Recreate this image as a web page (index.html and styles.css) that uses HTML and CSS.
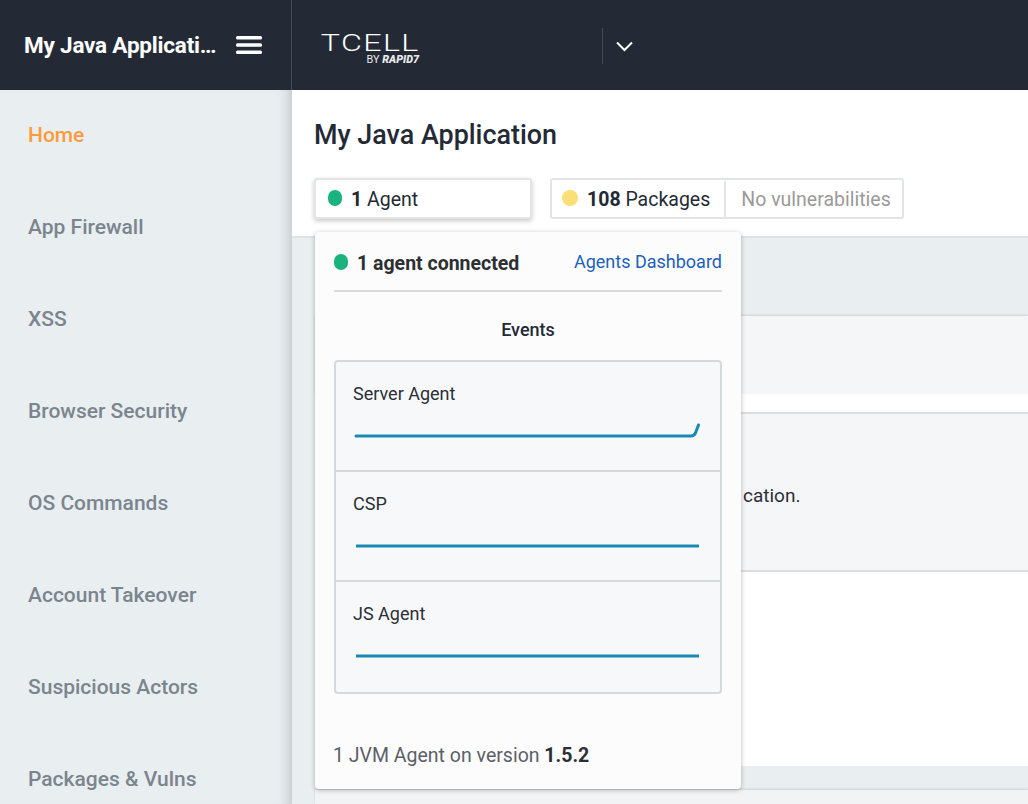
FILE: index.html
```html
<!DOCTYPE html>
<html lang="en">
<head>
<meta charset="utf-8">
<title>My Java Application</title>
<link rel="stylesheet" href="styles.css">
</head>
<body>
<header class="topbar">
  <div class="app-switch">
    <span class="app-name">My Java Application</span>
    <svg class="burger" width="26" height="18" viewBox="0 0 26 18"><rect y="0" width="26" height="3.500" rx="1.500"/><rect y="7.250" width="26" height="3.500" rx="1.500"/><rect y="14.500" width="26" height="3.500" rx="1.500"/></svg>
  </div>
  <div class="brand">
    <div class="logo">
      <span class="logo-main">TCELL</span>
      <span class="logo-sub">BY <b>RAPID7</b></span>
    </div>
  </div>
  <div class="brand-menu">
    <svg width="17" height="11" viewBox="0 0 17 11"><path d="M1 1.500 8.500 9 16 1.500" fill="none" stroke="#fff" stroke-width="2"/></svg>
  </div>
</header>
<div class="body">
  <nav class="sidebar">
    <a class="nav-item active">Home</a>
    <a class="nav-item">App Firewall</a>
    <a class="nav-item">XSS</a>
    <a class="nav-item">Browser Security</a>
    <a class="nav-item">OS Commands</a>
    <a class="nav-item">Account Takeover</a>
    <a class="nav-item">Suspicious Actors</a>
    <a class="nav-item">Packages &amp; Vulns</a>
  </nav>
  <main class="main">
    <section class="head">
      <h1 class="title">My Java Application</h1>
      <div class="chips">
        <div class="chip chip-open"><span class="dot green"></span><span><b>1</b> Agent</span></div>
        <div class="chip chip-split">
          <div class="chip-part"><span class="dot yellow"></span><span><b>108</b> Packages</span></div>
          <div class="chip-part muted">No vulnerabilities</div>
        </div>
      </div>
    </section>
    <section class="content">
      <div class="panel panel-a"></div>
      <div class="gap-white"></div>
      <div class="panel panel-b"><p class="panel-text">cation.</p></div>
      <div class="panel-white"></div>
      <div class="gap-gray"></div>
      <div class="panel-last"></div>
    </section>
    <aside class="popover">
      <div class="pop-head">
        <div class="pop-status"><span class="dot green"></span><b>1 agent connected</b></div>
        <a class="pop-link">Agents Dashboard</a>
      </div>
      <h2 class="pop-title">Events</h2>
      <div class="events">
        <div class="event">
          <div class="event-name">Server Agent</div>
          <svg class="spark" width="345" height="20" viewBox="0 0 345 20"><path d="M2 17H337Q340 17 341.500 14L344.500 6" fill="none" stroke="#1a8ab5" stroke-width="3" stroke-linecap="round"/></svg>
        </div>
        <div class="event">
          <div class="event-name">CSP</div>
          <svg class="spark" width="345" height="20" viewBox="0 0 345 20"><path d="M2 17H345" fill="none" stroke="#1a8ab5" stroke-width="3"/></svg>
        </div>
        <div class="event">
          <div class="event-name">JS Agent</div>
          <svg class="spark" width="345" height="20" viewBox="0 0 345 20"><path d="M2 17H345" fill="none" stroke="#1a8ab5" stroke-width="3"/></svg>
        </div>
      </div>
      <div class="pop-foot">1 JVM Agent on version <b>1.5.2</b></div>
    </aside>
  </main>
</div>
</body>
</html>
```
FILE: styles.css
```css
* { box-sizing: border-box; }
html, body { margin: 0; height: 100%; overflow: hidden; }
body { font-family: Roboto, "Liberation Sans", sans-serif; background: #fff; color: #232a35; }
b { font-weight: 700; }

.topbar { display: flex; height: 90px; background: #232a35; color: #fff; }
.app-switch { width: 292px; flex: none; display: flex; align-items: center; padding: 0 29px 0 24px; border-right: 1px solid #444b55; }
.app-name { flex: 1; min-width: 0; font-size: 22.500px; font-weight: 700; letter-spacing: -.2px; white-space: nowrap; overflow: hidden; text-overflow: ellipsis; margin-right: 17px; }
.burger { flex: none; fill: #fff; }
.brand { width: 310px; flex: none; display: flex; align-items: center; padding: 0 0 0 30px; }
.logo { width: 97px; display: flex; flex-direction: column; align-items: flex-end; margin-top: 10px; }
.logo-main { font-family: Roboto, sans-serif; font-weight: 300; font-size: 23px; line-height: 18px; letter-spacing: 1px; margin-right: -1px; white-space: nowrap; transform: scaleX(1.4); transform-origin: right center; }
.logo-sub { font-size: 10.800px; line-height: 11px; margin-top: 1px; white-space: nowrap; color: #e8eaec; }
.logo-sub b { font-weight: 900; font-style: italic; }
.brand-menu { display: flex; align-items: center; height: 36px; align-self: center; padding-left: 13px; border-left: 1px solid #444b55; margin-top: 2px; }
.brand-menu svg { display: block; }

.body { display: flex; height: 714px; overflow: hidden; }
.sidebar { width: 292px; flex: none; height: 714px; overflow: hidden; background: #e9eef1; box-shadow: inset -12px 0 12px -8px #c5cacd; padding: 22px 0 0 28px; display: flex; flex-direction: column; }
.nav-item { height: 92px; flex: none; font-size: 21px; font-weight: 500; line-height: 46px; color: #7b858e; white-space: nowrap; }
.nav-item.active { color: #fd9b3b; }

.main { flex: 1; min-width: 0; position: relative; display: flex; flex-direction: column; }
.head { height: 148px; flex: none; padding: 27px 0 0 22px; border-bottom: 2px solid #dfe3e6; }
.title { margin: 0; font-size: 26.900px; line-height: 36px; font-weight: 500; color: #232a35; }
.chips { display: flex; gap: 18px; margin-top: 25px; font-size: 19.500px; }
.chip { height: 41px; display: flex; align-items: center; border: 2px solid #e3e4e6; border-radius: 3px; background: #fff; color: #232a35; white-space: nowrap; padding-top: 1px; }
.chip-open { width: 218px; padding-left: 12px; gap: 9px; box-shadow: 0 2px 5px rgba(0,0,0,.22); }
.chip-part { display: flex; align-items: center; gap: 9px; height: 100%; padding: 0 14px 0 10px; }
.chip-part.muted { color: #9a9a9a; border-left: 2px solid #e3e4e6; padding: 0 11px 0 15px; }
.dot { width: 14px; height: 16px; border-radius: 7px; flex: none; margin-top: -2px; }
.dot.green { background: #1ab37d; }
.dot.yellow { width: 16px; height: 16px; border-radius: 50%; background: #f9df75; }

.content { flex: 1; min-height: 0; overflow: hidden; background: #e9eef1; padding: 78px 0 0 23px; display: flex; flex-direction: column; }
.panel { background: #f4f6f8; }
.panel-a { height: 78px; flex: none; box-shadow: 0 -1px 2px #ccd0d4; }
.gap-white { height: 18px; flex: none; background: #fff; }
.panel-b { height: 160px; flex: none; border-top: 2px solid #dcdfe2; border-bottom: 2px solid #dcdfe2; padding: 68px 0 0 0; }
.panel-text { margin: 0; font-size: 19px; line-height: 28px; color: #2c2f36; padding-left: 428px; white-space: nowrap; }
.panel-white { height: 194px; flex: none; background: #fff; }
.gap-gray { height: 24px; flex: none; }
.panel-last { flex: 1; background: #f1f3f5; box-shadow: 0 -1px 2px #ccd0d4; }

.popover { position: absolute; left: 23px; top: 142px; width: 426px; height: 557px; background: #fcfcfc; border-radius: 4px; box-shadow: 0 1px 5px rgba(0,0,0,.28); padding: 0 19px; }
.pop-head { height: 60px; display: flex; align-items: center; justify-content: space-between; border-bottom: 2px solid #d8dadc; }
.pop-status { display: flex; align-items: center; gap: 9px; font-size: 19.500px; color: #2d2f33; padding-top: 4px; }
.pop-status b { font-weight: 700; }
.pop-link { font-size: 18px; color: #1e62b8; margin-top: 1px; }
.pop-title { margin: 0; height: 68px; padding-top: 26px; text-align: center; font-size: 18px; line-height: 24px; font-weight: 500; color: #232a35; }
.events { height: 334px; border: 2px solid #d3dadd; border-radius: 4px; background: #f6f8fa; }
.event { height: 110px; border-bottom: 2px solid #d3dadd; padding: 20px 0 0 17px; }
.event:last-child { border-bottom: 0; }
.event-name { font-size: 18px; line-height: 24px; color: #2c2f36; }
.spark { display: block; margin: 13px 0 0 1px; overflow: visible; }
.pop-foot { margin: 49px 0 0 -1px; font-size: 19.500px; line-height: 26px; color: #5c5f68; }
.pop-foot b { color: #2d2f33; }
```
